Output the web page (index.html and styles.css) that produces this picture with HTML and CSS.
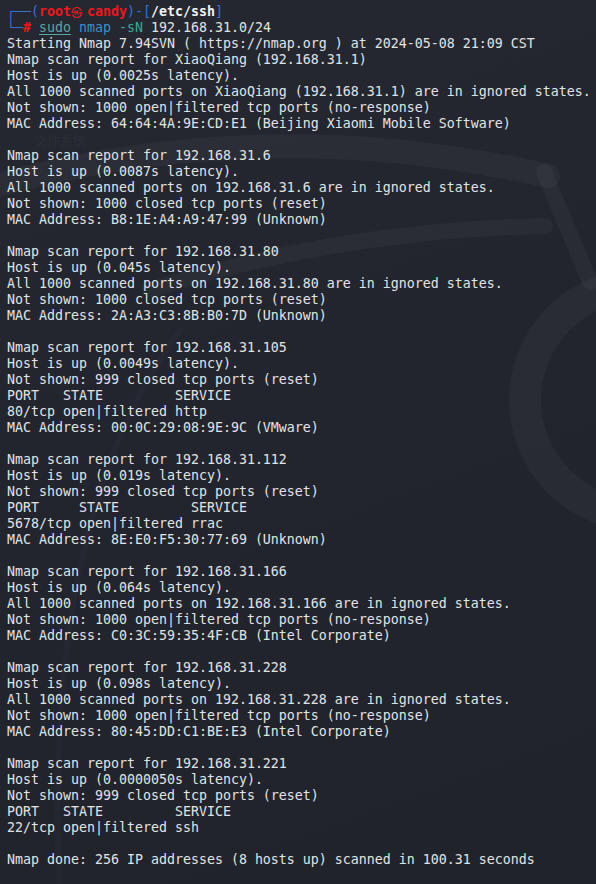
FILE: index.html
```html
<!DOCTYPE html>
<html lang="en">
<head>
<meta charset="utf-8">
<title>Terminal - nmap</title>
<link rel="stylesheet" href="styles.css">
</head>
<body>
<div class="screen">
<svg class="wallpaper" width="596" height="884" viewBox="0 0 596 884" aria-hidden="true">
  <path class="wp" d="M -20 190 Q 260 110 548 176" stroke-width="24"/>
  <path class="wp" d="M 150 290 Q 340 230 545 226" stroke-width="16"/>
  <path class="wp" d="M 544 172 L 590 282" stroke-width="16"/>
  <circle class="wp" cx="640" cy="400" r="115" stroke-width="32"/>
  <path class="wp faint" d="M 60 900 Q 40 520 180 330" stroke-width="6"/>
</svg>
<div class="ghost ghost-b">文件系统</div>
<pre class="term"><span class="bx">┌──(</span><span class="usr">root<span class="at">㉿</span>candy</span><span class="bx">)-[</span><span class="dir">/etc/ssh</span><span class="bx">]</span>
<span class="bx">└─</span><span class="hash">#</span> <span class="pre">sudo</span> <span class="cmd">nmap</span> <span class="opt">-sN</span> 192.168.31.0/24
Starting Nmap 7.94SVN ( https://nmap.org ) at 2024-05-08 21:09 CST
Nmap scan report for XiaoQiang (192.168.31.1)
Host is up (0.0025s latency).
All 1000 scanned ports on XiaoQiang (192.168.31.1) are in ignored states.
Not shown: 1000 open|filtered tcp ports (no-response)
MAC Address: 64:64:4A:9E:CD:E1 (Beijing Xiaomi Mobile Software)

Nmap scan report for 192.168.31.6
Host is up (0.0087s latency).
All 1000 scanned ports on 192.168.31.6 are in ignored states.
Not shown: 1000 closed tcp ports (reset)
MAC Address: B8:1E:A4:A9:47:99 (Unknown)

Nmap scan report for 192.168.31.80
Host is up (0.045s latency).
All 1000 scanned ports on 192.168.31.80 are in ignored states.
Not shown: 1000 closed tcp ports (reset)
MAC Address: 2A:A3:C3:8B:B0:7D (Unknown)

Nmap scan report for 192.168.31.105
Host is up (0.0049s latency).
Not shown: 999 closed tcp ports (reset)
PORT   STATE         SERVICE
80/tcp open|filtered http
MAC Address: 00:0C:29:08:9E:9C (VMware)

Nmap scan report for 192.168.31.112
Host is up (0.019s latency).
Not shown: 999 closed tcp ports (reset)
PORT     STATE         SERVICE
5678/tcp open|filtered rrac
MAC Address: 8E:E0:F5:30:77:69 (Unknown)

Nmap scan report for 192.168.31.166
Host is up (0.064s latency).
All 1000 scanned ports on 192.168.31.166 are in ignored states.
Not shown: 1000 open|filtered tcp ports (no-response)
MAC Address: C0:3C:59:35:4F:CB (Intel Corporate)

Nmap scan report for 192.168.31.228
Host is up (0.098s latency).
All 1000 scanned ports on 192.168.31.228 are in ignored states.
Not shown: 1000 open|filtered tcp ports (no-response)
MAC Address: 80:45:DD:C1:BE:E3 (Intel Corporate)

Nmap scan report for 192.168.31.221
Host is up (0.0000050s latency).
Not shown: 999 closed tcp ports (reset)
PORT   STATE         SERVICE
22/tcp open|filtered ssh

Nmap done: 256 IP addresses (8 hosts up) scanned in 100.31 seconds</pre>
</div>
</body>
</html>
```

FILE: styles.css
```css
html, body {
  margin: 0;
  padding: 0;
  background: #23252e;
}

.screen {
  position: relative;
  width: 596px;
  height: 884px;
  overflow: hidden;
  background: linear-gradient(160deg, #262831 0%, #23252e 45%, #21232b 100%);
}

.wallpaper {
  position: absolute;
  left: 0;
  top: 0;
  z-index: 0;
}

.wp {
  fill: none;
  stroke: rgba(255, 255, 255, 0.035);
  stroke-linecap: round;
}

.wp.faint {
  stroke: rgba(120, 150, 200, 0.03);
}

.ghost {
  position: absolute;
  z-index: 0;
  color: rgba(255, 255, 255, 0.05);
  font-family: "Noto Sans", "Noto Sans CJK SC", sans-serif;
  font-size: 13px;
  line-height: 16px;
}

.ghost-b {
  left: 34px;
  top: 132px;
}

.term {
  position: relative;
  z-index: 1;
  margin: 0;
  padding: 4px 0 0 7px;
  font-family: "DejaVu Sans Mono", "Liberation Mono", monospace;
  font-size: 13.29px;
  line-height: 16px;
  color: #e3e3e3;
  white-space: pre;
}

.bx {
  color: #3872d0;
}

.usr {
  color: #e8191f;
  font-weight: bold;
}

.at {
  display: inline-block;
  width: 16px;
  font-family: "Noto Sans CJK SC", "DejaVu Sans", sans-serif;
  font-size: 11px;
  font-weight: bold;
  text-align: left;
  vertical-align: top;
}

.dir {
  color: #f2f2f2;
  font-weight: bold;
}

.hash {
  color: #e8191f;
  font-weight: bold;
}

.pre {
  color: #5aa69e;
  text-decoration: underline;
  text-underline-offset: 2px;
}

.cmd {
  color: #3f8ecb;
}

.opt {
  color: #3aa898;
}
```
